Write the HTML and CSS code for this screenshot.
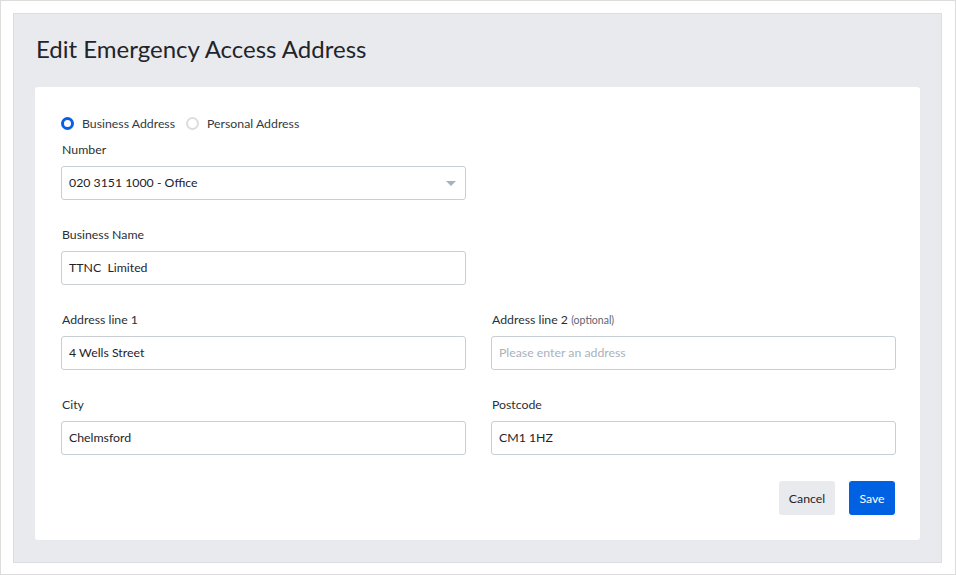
FILE: index.html
```html
<!DOCTYPE html>
<html>
<head>
<meta charset="utf-8">
<link rel="stylesheet" href="styles.css">
</head>
<body>
<div class="frame">
  <div class="panel">
    <h1 class="title">Edit Emergency Access Address</h1>
    <div class="card">
      <div class="radios">
        <label class="radio"><span class="dot on"></span>Business Address</label>
        <label class="radio"><span class="dot"></span>Personal Address</label>
      </div>
      <div class="field half first">
        <div class="label">Number</div>
        <div class="input select">020 3151 1000 - Office<span class="caret"></span></div>
      </div>
      <div class="field half">
        <div class="label">Business Name</div>
        <div class="input">TTNC&nbsp; Limited</div>
      </div>
      <div class="row">
        <div class="field">
          <div class="label">Address line 1</div>
          <div class="input">4 Wells Street</div>
        </div>
        <div class="field">
          <div class="label">Address line 2 <span class="opt">(optional)</span></div>
          <div class="input placeholder">Please enter an address</div>
        </div>
      </div>
      <div class="row">
        <div class="field">
          <div class="label">City</div>
          <div class="input">Chelmsford</div>
        </div>
        <div class="field">
          <div class="label">Postcode</div>
          <div class="input">CM1 1HZ</div>
        </div>
      </div>
      <div class="actions">
        <button class="btn cancel">Cancel</button>
        <button class="btn save">Save</button>
      </div>
    </div>
  </div>
</div>
</body>
</html>
```
FILE: styles.css
```css
* { box-sizing: border-box; }
html, body { margin: 0; padding: 0; }
body {
  width: 956px; height: 575px;
  font-family: Lato, "Noto Sans", sans-serif;
  color: #1f2328;
  background: #fff;
}
.frame {
  width: 956px; height: 575px;
  border: 1px solid #dcdcdc;
  padding: 12px 13px 12px 12px;
}
.panel {
  height: 550px;
  background: #e9eaee;
  border: 1px solid #dcdde1;
  padding: 0 21px 0 21px;
}
.title {
  margin: 0;
  height: 73px;
  padding-top: 19px;
  font-size: 24px;
  font-weight: 400;
  line-height: 32px;
  color: #1f252b;
  padding-left: 1px;
}
.card {
  background: #fff;
  border-radius: 3px;
  height: 453px;
  padding: 28px 25px 0 26px;
}
.radios { display: flex; gap: 11px; height: 16px; align-items: center; font-size: 12.3px; color: #333a40; }
.radio { display: flex; align-items: center; gap: 8px; }
.dot {
  width: 13px; height: 13px; border-radius: 50%;
  border: 2px solid #dadde1; background: #fff;
}
.dot.on { border: 3px solid #0a5fe0; }
.field { margin-top: 27px; }
.field.first { margin-top: 11px; }
.field.half { width: 405px; }
.label { font-size: 12.3px; color: #2a3036; height: 16px; line-height: 16px; padding-left: 1px; margin-bottom: 8px; }
.opt { font-size: 10.5px; color: #5b6570; }
.input {
  position: relative;
  height: 34px;
  border: 1px solid #c9ced4;
  border-radius: 3px;
  padding: 0 7px;
  line-height: 32px;
  font-size: 12.3px;
  color: #1f2328;
}
.placeholder { color: #aab2bc; }
.caret {
  position: absolute; right: 9px; top: 14px;
  width: 0; height: 0;
  border-left: 5px solid transparent; border-right: 5px solid transparent;
  border-top: 5px solid #a6b2c2;
}
.row { display: grid; grid-template-columns: 405px 405px; column-gap: 25px; margin-top: 27px; }
.row .field { margin-top: 0; }
.actions { display: flex; justify-content: flex-end; gap: 14px; margin-top: 26px; }
.btn {
  height: 34px; border: 0; border-radius: 3px;
  font-family: inherit; font-size: 12.3px;
  padding: 0;
}
.cancel { background: #e9eaee; color: #1f2328; width: 56px; }
.save { background: #0061e3; color: #fff; width: 46px; }
```
